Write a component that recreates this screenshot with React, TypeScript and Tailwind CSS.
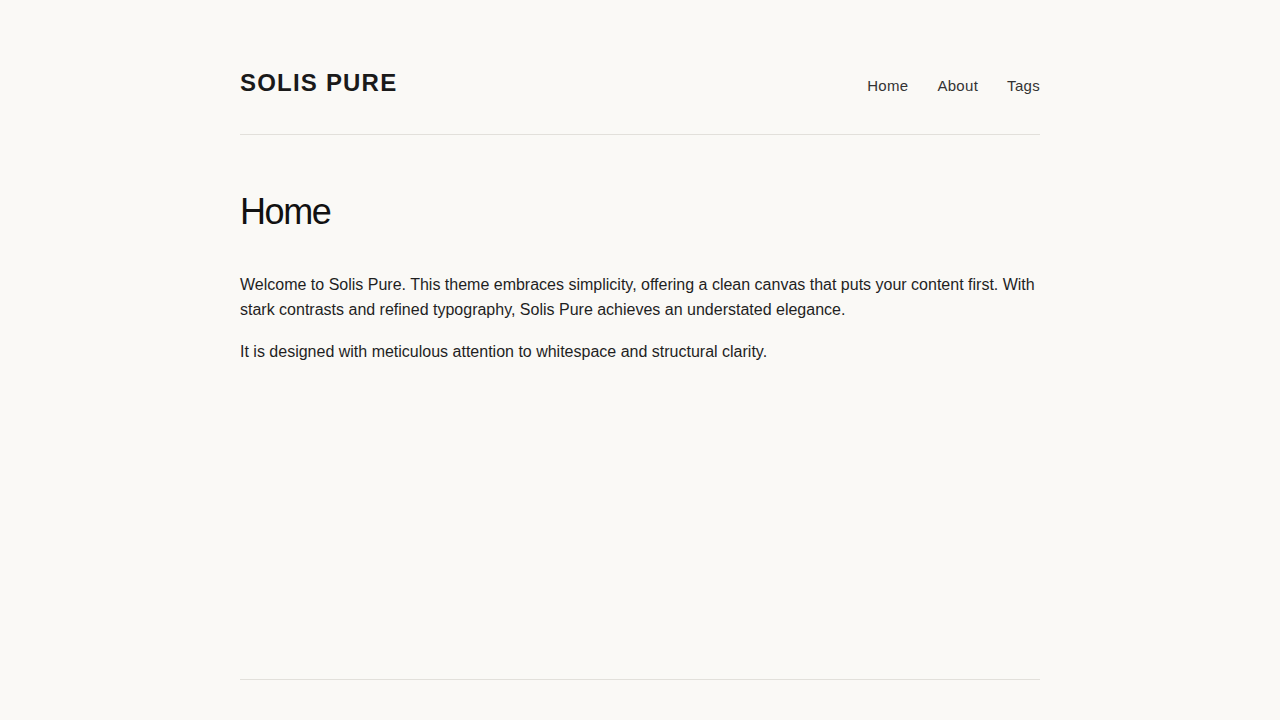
export default function App() {
  return (
    <div
      className="min-h-screen bg-[#faf9f6] text-[#1a1a1a]"
      style={{ fontFamily: '"Liberation Sans", Arial, sans-serif' }}
    >
      <div className="max-w-[800px] mx-auto">
        {/* Header */}
        <header className="flex items-baseline justify-between pt-[68px] pb-[36px] border-b border-[#e2e0db]">
          <a href="#" className="text-[24px] leading-[30px] font-bold tracking-[1.2px] text-[#1a1a1a]">
            SOLIS PURE
          </a>
          <nav className="flex items-baseline gap-[29px] text-[15px] tracking-[0.3px] text-[#333]">
            <a href="#">Home</a>
            <a href="#">About</a>
            <a href="#">Tags</a>
          </nav>
        </header>

        {/* Main */}
        <main className="min-h-[544px] pt-[55px]">
          <h1 className="text-[36px] leading-[1.2] font-normal tracking-[-0.04em] text-[#111] mb-[39px]">Home</h1>
          <div className="text-[16px] leading-[25px] text-[#1f1f1f] space-y-[17px]">
            <p>
              Welcome to Solis Pure. This theme embraces simplicity, offering a clean canvas that puts your
              content first. With stark contrasts and refined typography, Solis Pure achieves an understated
              elegance.
            </p>
            <p>It is designed with meticulous attention to whitespace and structural clarity.</p>
          </div>
        </main>

        {/* Footer */}
        <footer className="border-t border-[#e2e0db] h-[41px]" />
      </div>
    </div>
  )
}
